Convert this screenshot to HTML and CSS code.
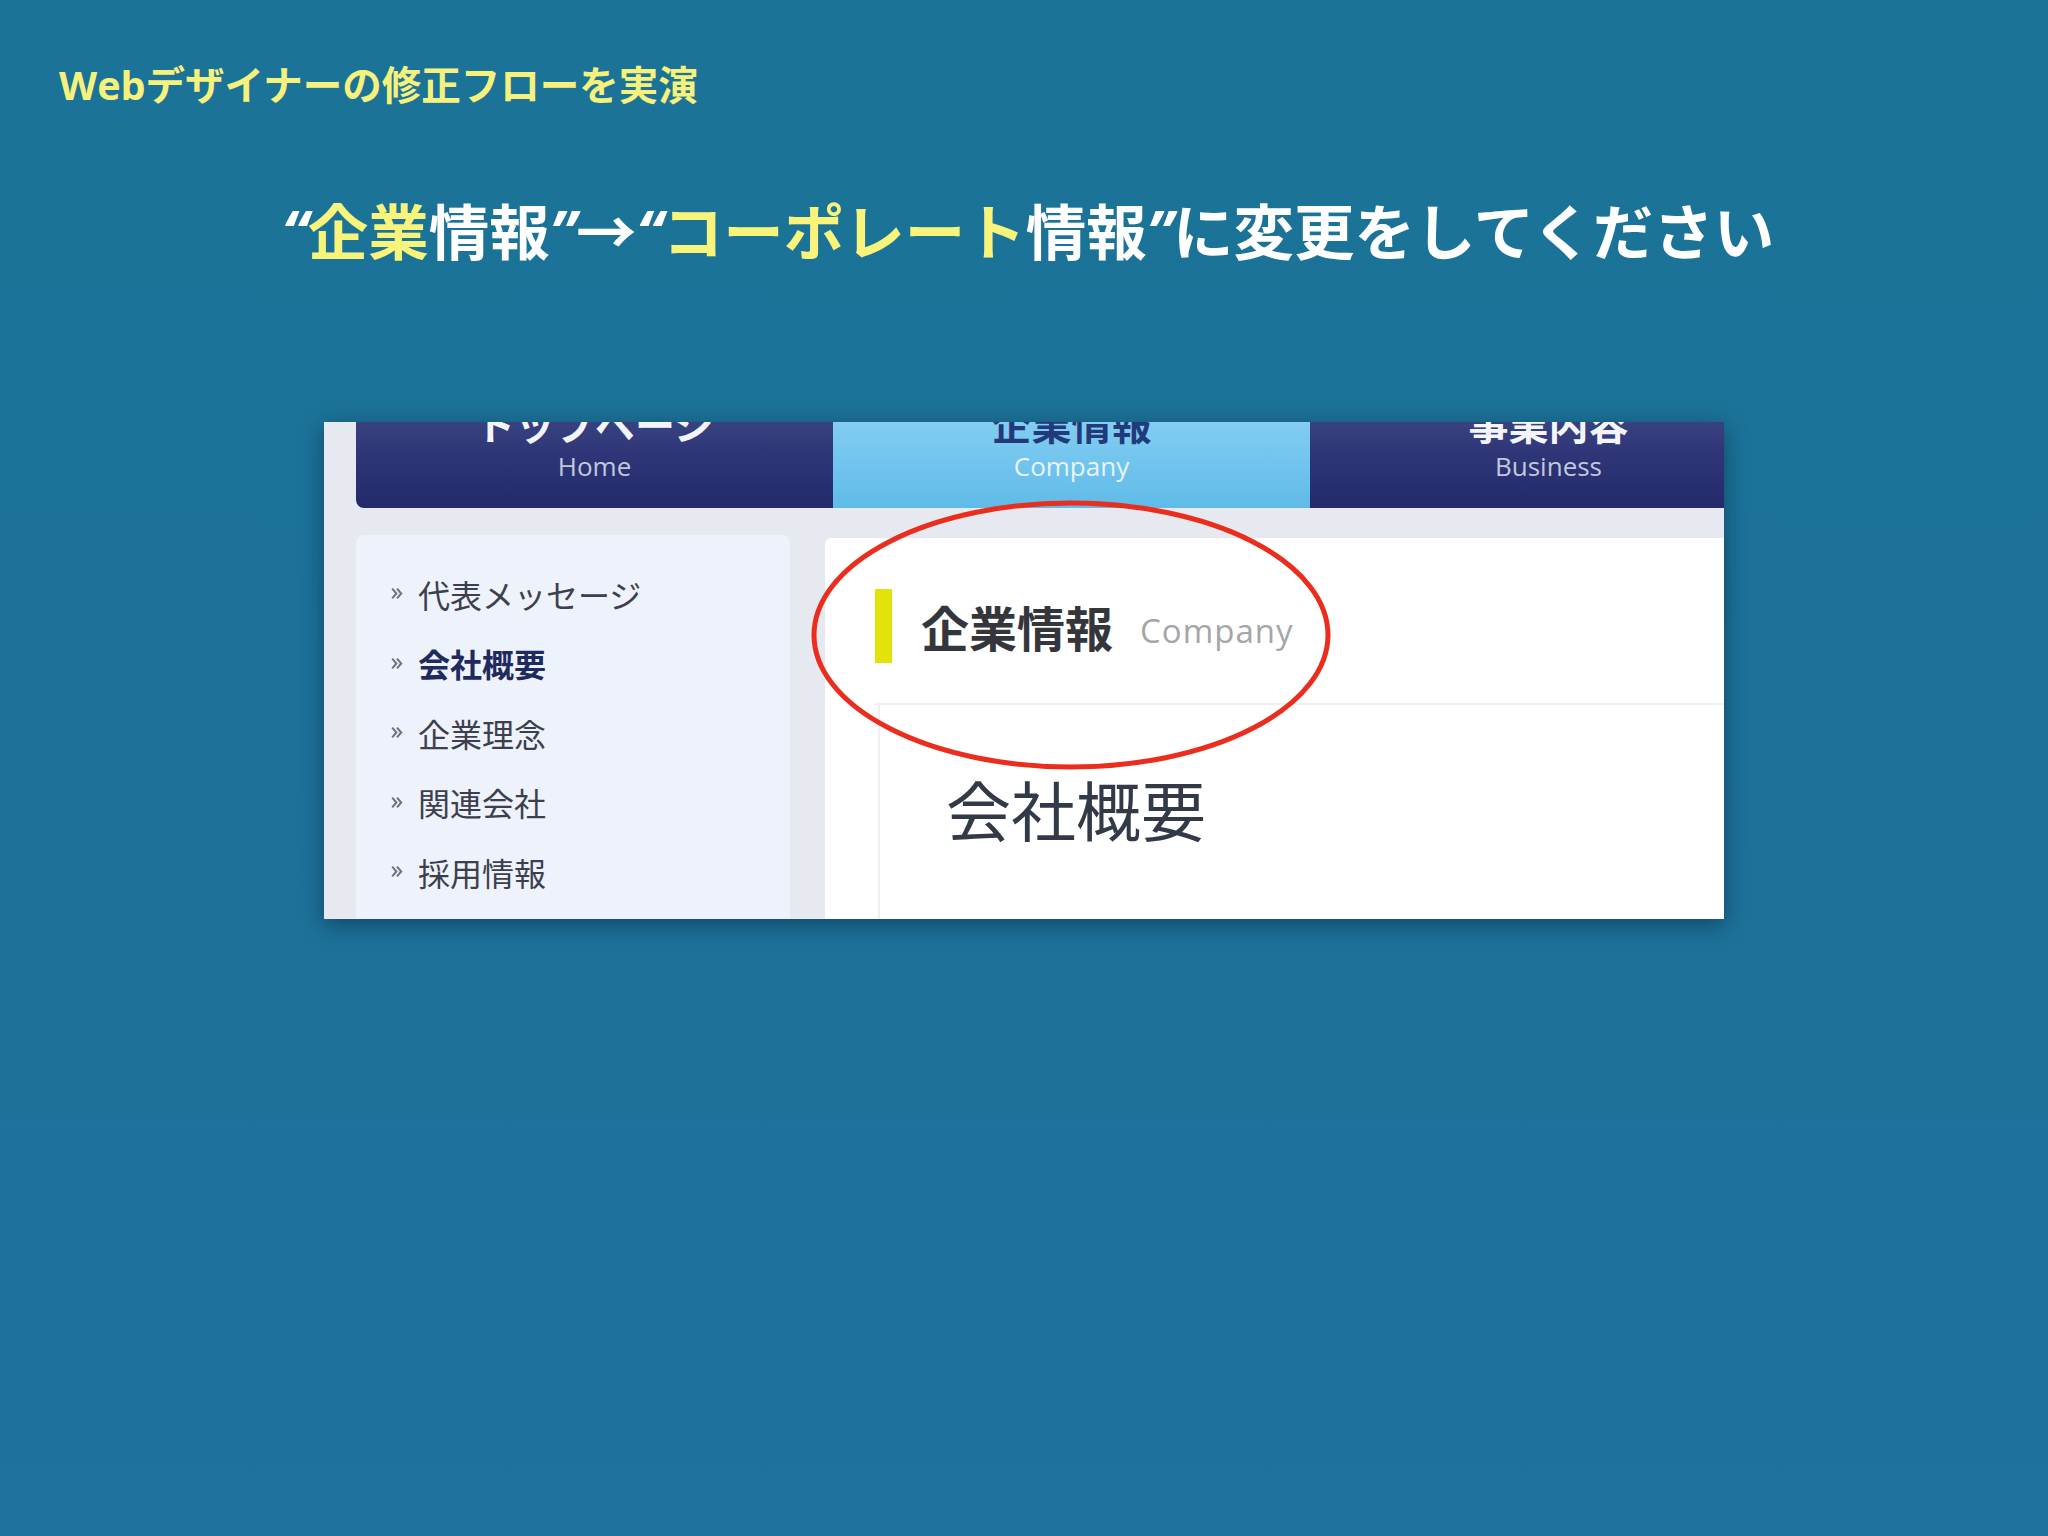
FILE: index.html
```html
<!DOCTYPE html>
<html lang="ja">
<head>
<meta charset="utf-8">
<title>Webデザイナーの修正フローを実演</title>
<link rel="stylesheet" href="styles.css">
</head>
<body>
<div class="slide">
  <div class="label">Webデザイナーの修正フローを実演</div>
  <h1 class="title"><span class="q">“</span><span class="hl">企業</span>情報<span class="q">”</span>→<span class="q">“</span><span class="hl">コーポレート</span>情報<span class="q">”</span>に変更をしてください</h1>

  <div class="shot">
    <nav class="tabs">
      <div class="tab">
        <span class="tab-jp">トップページ</span>
        <span class="tab-en">Home</span>
      </div>
      <div class="tab active">
        <span class="tab-jp">企業情報</span>
        <span class="tab-en">Company</span>
      </div>
      <div class="tab">
        <span class="tab-jp">事業内容</span>
        <span class="tab-en">Business</span>
      </div>
    </nav>

    <div class="page">
      <aside class="side">
        <ul class="side-list">
          <li class="side-item"><svg class="chev" viewBox="0 0 10 12"><path d="M1 2 L4.5 6 L1 10 M5 2 L8.5 6 L5 10" fill="none" stroke="#6f7380" stroke-width="1.7"/></svg><span>代表メッセージ</span></li>
          <li class="side-item current"><svg class="chev" viewBox="0 0 10 12"><path d="M1 2 L4.5 6 L1 10 M5 2 L8.5 6 L5 10" fill="none" stroke="#6f7380" stroke-width="1.7"/></svg><span>会社概要</span></li>
          <li class="side-item"><svg class="chev" viewBox="0 0 10 12"><path d="M1 2 L4.5 6 L1 10 M5 2 L8.5 6 L5 10" fill="none" stroke="#6f7380" stroke-width="1.7"/></svg><span>企業理念</span></li>
          <li class="side-item"><svg class="chev" viewBox="0 0 10 12"><path d="M1 2 L4.5 6 L1 10 M5 2 L8.5 6 L5 10" fill="none" stroke="#6f7380" stroke-width="1.7"/></svg><span>関連会社</span></li>
          <li class="side-item"><svg class="chev" viewBox="0 0 10 12"><path d="M1 2 L4.5 6 L1 10 M5 2 L8.5 6 L5 10" fill="none" stroke="#6f7380" stroke-width="1.7"/></svg><span>採用情報</span></li>
        </ul>
      </aside>

      <main class="main">
        <div class="main-head">
          <span class="bar"></span>
          <h2 class="main-title">企業情報</h2>
          <span class="main-en">Company</span>
        </div>
        <div class="main-body">
          <h3 class="sub-title">会社概要</h3>
        </div>
      </main>
    </div>

    <svg class="mark" viewBox="0 0 1400 497" width="1400" height="497">
      <ellipse cx="747" cy="213" rx="257" ry="132" fill="none" stroke="#ea2d1c" stroke-width="5"/>
    </svg>
  </div>
</div>
</body>
</html>
```

FILE: styles.css
```css
html, body {
  margin: 0;
  padding: 0;
}

body {
  width: 2048px;
  height: 1536px;
  background: linear-gradient(180deg, #1b7397 0%, #1d729b 60%, #1f719e 100%);
  font-family: "Noto Sans CJK JP", "Noto Sans", sans-serif;
  overflow: hidden;
}

.slide {
  display: flex;
  flex-direction: column;
}

.label {
  padding: 60px 0 0 59px;
  font-family: "Open Sans", "Noto Sans CJK JP", sans-serif;
  font-size: 39.5px;
  line-height: 50px;
  font-weight: 700;
  color: #f6f17c;
}

.title {
  margin: 82px 0 0;
  padding-left: 8px;
  text-align: center;
  font-family: "Open Sans", "Noto Sans CJK JP", sans-serif;
  font-size: 60.5px;
  line-height: 80px;
  font-weight: 700;
  color: #ffffff;
}

.title .hl {
  color: #f8f37a;
}

.title .q {
  font-style: italic;
}

.shot {
  position: relative;
  width: 1400px;
  height: 497px;
  margin: 150px auto 0;
  background: #e6e9f0;
  overflow: hidden;
  box-shadow: 0 6px 22px rgba(0, 20, 40, 0.45);
  display: flex;
  flex-direction: column;
}

.tabs {
  display: flex;
  margin: -30px 0 0 32px;
  height: 116px;
  flex-shrink: 0;
}

.tab {
  width: 477px;
  flex-shrink: 0;
  height: 116px;
  box-sizing: border-box;
  padding-top: 11px;
  display: flex;
  flex-direction: column;
  align-items: center;
  background: linear-gradient(180deg, #434d8a 0%, #2f3778 50%, #222a6c 100%);
}

.tab:first-child {
  border-bottom-left-radius: 8px;
}

.tab.active {
  background: linear-gradient(180deg, #90d3f3 0%, #76c7ef 50%, #60bbe8 100%);
}

.tab-jp {
  font-size: 40px;
  line-height: 40px;
  font-weight: 700;
  color: #f4f5fa;
}

.tab-en {
  margin-top: 6px;
  font-family: "Open Sans", sans-serif;
  font-size: 26px;
  line-height: 34px;
  color: #c2c7de;
}

.tab.active .tab-jp {
  color: #223a7a;
}

.tab.active .tab-en {
  color: #e8f4fb;
}

.page {
  display: flex;
  gap: 35px;
  padding-left: 32px;
  margin-top: 27px;
  flex: 1;
}

.side {
  width: 434px;
  flex-shrink: 0;
  background: #eef2fa;
  border-radius: 8px 8px 0 0;
}

.side-list {
  list-style: none;
  margin: 0;
  padding: 24px 0 0 35px;
}

.side-item {
  display: flex;
  align-items: center;
  height: 69.5px;
  font-size: 32px;
  color: #3c404e;
}

.side-item.current {
  font-weight: 700;
  color: #1f2b5e;
}

.chev {
  width: 12px;
  height: 15px;
  margin-right: 15px;
}

.main {
  flex: 1;
  margin-top: 3px;
  background: #ffffff;
  border-radius: 6px 0 0 0;
}

.main-head {
  display: flex;
  align-items: center;
  margin-left: 50px;
  padding: 51px 0 40px;
  border-bottom: 2px solid #eef0f3;
}

.bar {
  width: 17px;
  height: 74px;
  background: #e3e20a;
  flex-shrink: 0;
}

.main-title {
  margin: 0 0 0 29px;
  font-size: 48px;
  line-height: 60px;
  font-weight: 700;
  color: #34363c;
}

.main-en {
  margin: 8px 0 0 27px;
  font-family: "Open Sans", sans-serif;
  font-size: 33px;
  color: #a4a6aa;
  letter-spacing: 1px;
}

.main-body {
  margin-left: 53px;
  border-left: 2px solid #eef0f3;
  padding: 63px 0 0 66px;
  height: 300px;
}

.sub-title {
  margin: 0;
  font-size: 65px;
  line-height: 80px;
  font-weight: 400;
  color: #323a47;
}

.mark {
  position: absolute;
  left: 0;
  top: 0;
  pointer-events: none;
}
```
